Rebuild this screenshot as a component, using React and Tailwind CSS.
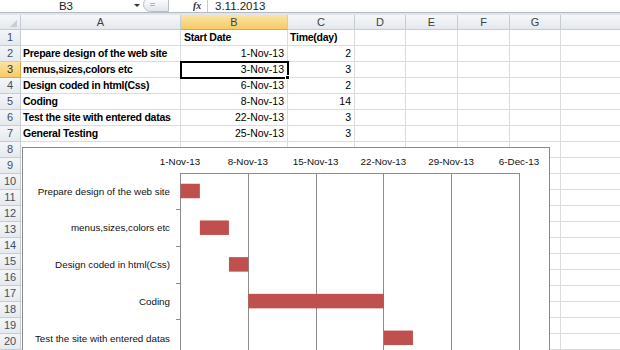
import React from 'react';

const cols = [
    { key: 'A', w: 'w-[160px]' },
    { key: 'B', w: 'w-[107px]' },
    { key: 'C', w: 'w-[67px]' },
    { key: 'D', w: 'w-[51px]' },
    { key: 'E', w: 'w-[52px]' },
    { key: 'F', w: 'w-[52px]' },
    { key: 'G', w: 'w-[51px]' },
];

const tasks = [
    { name: 'Prepare design of the web site', date: '1-Nov-13', start: 0, days: 2 },
    { name: 'menus,sizes,colors etc', date: '3-Nov-13', start: 2, days: 3 },
    { name: 'Design coded in html(Css)', date: '6-Nov-13', start: 5, days: 2 },
    { name: 'Coding', date: '8-Nov-13', start: 7, days: 14 },
    { name: 'Test the site with entered datas', date: '22-Nov-13', start: 21, days: 3 },
    { name: 'General Testing', date: '25-Nov-13', start: 24, days: 3 },
];

const ticks = ['1-Nov-13', '8-Nov-13', '15-Nov-13', '22-Nov-13', '29-Nov-13', '6-Dec-13'];

const font = "font-['Liberation_Sans',Arial,sans-serif]";

const FormulaBar = () => (
    <div className="h-[13px] flex items-start overflow-hidden bg-white border-b border-[#b3bac3]">
        <div className="w-[132px] text-center text-[11.5px] leading-[12px] text-[#222]">B3</div>
        <div className="w-[10px] flex justify-center pt-[4px]">
            <div className="w-0 h-0 border-l-[3px] border-r-[3px] border-t-[3px] border-l-transparent border-r-transparent border-t-[#333]" />
        </div>
        <div className="ml-[1px] w-[26px] h-[15px] -mt-[3px] rounded-l-full border border-[#b9c0c8] bg-gradient-to-b from-white to-[#e1e5ea] flex items-center pl-[6px]">
            <div className="w-[5px] h-[3px] border-t border-b border-[#b0b6be]" />
        </div>
        <div className="w-[24px]" />
        <div className="w-[14px] text-[10px] leading-[12px] italic font-bold font-['Liberation_Serif',serif] text-[#333]">
            fx
        </div>
        <div className="w-px h-[13px] bg-[#c3c9d0]" />
        <div className="pl-[7px] text-[11.5px] leading-[12px] text-[#222]">3.11.2013</div>
    </div>
);

const HeaderRow = () => (
    <div className="flex h-[15px]">
        <div className="w-[21px] relative border-r border-b border-[#c6ccd4] bg-gradient-to-b from-[#f6f7f9] to-[#e4e8ed]">
            <svg width="7" height="7" className="absolute right-[3px] bottom-[2px]">
                <polygon points="7,0 7,7 0,7" fill="#c9ced5" />
            </svg>
        </div>
        {cols.map((c) => (
            <div
                key={c.key}
                className={`${c.w} ${c.key === 'B'
                    ? 'bg-gradient-to-b from-[#fbe3a2] to-[#f6cb62] border-b-[#e8a33a]'
                    : 'bg-gradient-to-b from-[#f6f7f9] to-[#e4e8ed] border-b-[#c6ccd4]'} border-r border-b border-r-[#c6ccd4] flex items-center justify-center text-[11px] leading-none text-[#3f3f3f]`}
            >
                {c.key}
            </div>
        ))}
        <div className="flex-1 border-b border-[#c6ccd4] bg-gradient-to-b from-[#f6f7f9] to-[#e4e8ed]" />
    </div>
);

const Row = ({ n, a, b, c, head }) => (
    <div className="flex h-[16px]">
        <div
            className={`w-[21px] border-r border-b flex items-center justify-center text-[11px] leading-none ${n === 3
                ? 'bg-gradient-to-b from-[#fbe3a2] to-[#f6cb62] border-[#e8a33a] text-[#333]'
                : 'bg-gradient-to-b from-[#f3f5f8] to-[#e6eaef] border-[#c6ccd4] text-[#45505e]'}`}
        >
            {n}
        </div>
        <div className="w-[160px] border-r border-b border-[#dadcdd] pl-[2px] text-[10.5px] tracking-[-0.25px] leading-[15px] font-bold text-black whitespace-nowrap overflow-hidden">
            {a}
        </div>
        <div className={`w-[107px] border-r border-b border-[#dadcdd] text-[10.5px] leading-[15px] text-black whitespace-nowrap ${head ? 'pl-[3px] font-bold tracking-[-0.25px]' : 'pr-[3px] text-right'}`}>
            {b}
        </div>
        <div className={`w-[67px] border-r border-b border-[#dadcdd] text-[10.5px] leading-[15px] text-black whitespace-nowrap ${head ? 'pl-[2px] font-bold tracking-[-0.25px]' : 'pr-[3px] text-right'}`}>
            {c}
        </div>
        <div className="w-[51px] border-r border-b border-[#dadcdd]" />
        <div className="w-[52px] border-r border-b border-[#dadcdd]" />
        <div className="w-[52px] border-r border-b border-[#dadcdd]" />
        <div className="w-[51px] border-r border-b border-[#dadcdd]" />
        <div className="flex-1 border-b border-[#dadcdd]" />
    </div>
);

const GanttChart = () => {
    const x0 = 180;
    const perDay = 339 / 35;
    const top = 172.6;
    const band = 36.7;
    return (
        <div className="absolute left-[22px] top-[147px] w-[528px] h-[230px] bg-white border border-[#8a8a8a]">
            <svg width="526" height="228" viewBox="23 148 526 228" className="block">
                {ticks.map((t, i) => (
                    <g key={t}>
                        <text x={x0 + i * 67.8} y="165" textAnchor="middle" fontSize="9.8" fill="#111" fontFamily="Liberation Sans, Arial, sans-serif">
                            {t}
                        </text>
                        <line x1={Math.round(x0 + i * 67.8) + 0.5} y1="173" x2={Math.round(x0 + i * 67.8) + 0.5} y2="380" stroke="#8c8c8c" strokeWidth="1" />
                    </g>
                ))}
                <line x1="180" y1="173.5" x2="520" y2="173.5" stroke="#8c8c8c" strokeWidth="1" />
                {[1, 2, 3, 4, 5].map((k) => (
                    <line key={k} x1="176" y1={Math.round(top + band * k) + 0.5} x2="180" y2={Math.round(top + band * k) + 0.5} stroke="#8c8c8c" strokeWidth="1" />
                ))}
                {tasks.map((t, i) => {
                    const cy = top + band * (i + 0.5);
                    return (
                        <g key={t.name}>
                            <rect x={x0 + t.start * perDay + 0.5} y={cy - 7.2} width={t.days * perDay} height="14.5" fill="#c0504d" />
                            <text x="170" y={cy + 3.8} textAnchor="end" fontSize="9.8" fill="#111" fontFamily="Liberation Sans, Arial, sans-serif">
                                {t.name}
                            </text>
                        </g>
                    );
                })}
            </svg>
        </div>
    );
};

const App = () => {
    const body = [
        { a: '', b: 'Start Date', c: 'Time(day)', head: true },
        ...tasks.map((t, i) => ({ a: t.name, b: t.date, c: String([2, 3, 2, 14, 3, 3][i]) })),
    ];
    const empty = Array.from({ length: 13 }, (_, i) => i + 8);

    return (
        <div className={`relative w-[620px] h-[350px] overflow-hidden bg-white ${font}`}>
            <FormulaBar />
            <div className="h-[2px] bg-[#e2e6eb]" />
            <HeaderRow />
            {body.map((r, i) => (
                <Row key={i} n={i + 1} a={r.a} b={r.b} c={r.c} head={r.head} />
            ))}
            {empty.map((n) => (
                <Row key={n} n={n} a="" b="" c="" />
            ))}

            {/* selected cell B3 */}
            <div className="absolute left-[180px] top-[61px] w-[109px] h-[18px] border-2 border-black" />
            <div className="absolute left-[285px] top-[75px] w-[5px] h-[5px] bg-black border border-white" />

            <GanttChart />
        </div>
    );
};

export default App;
